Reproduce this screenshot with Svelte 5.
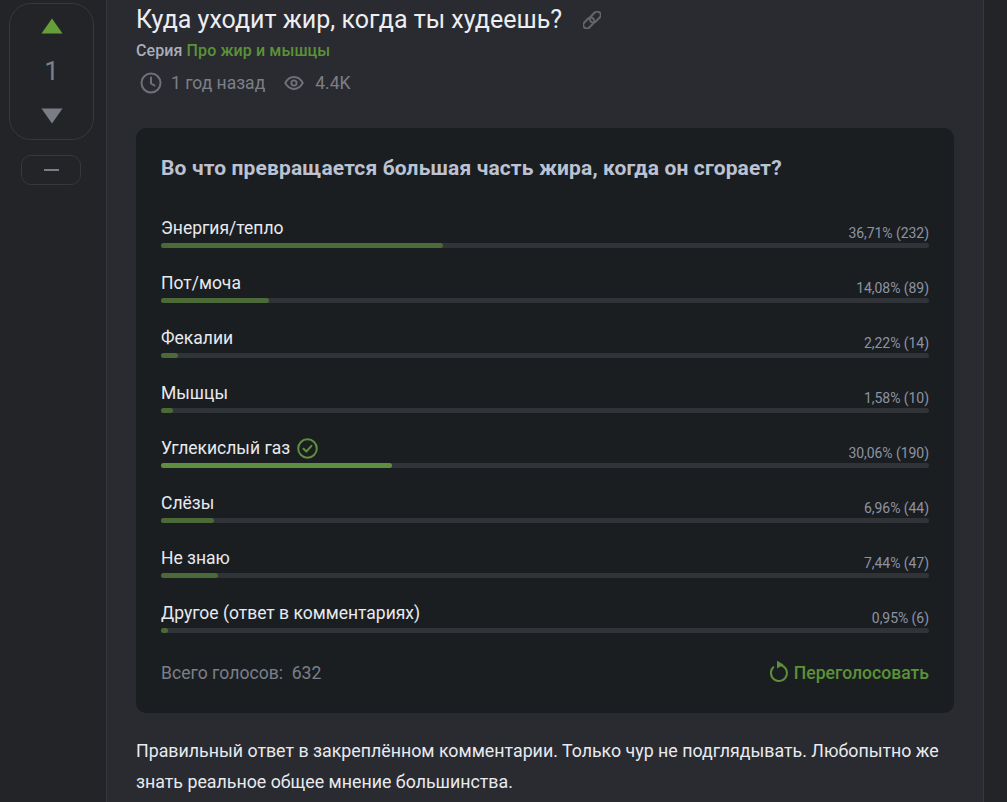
<script>
  const options = [
    { label: 'Энергия/тепло', stat: '36,71% (232)', pct: 36.71 },
    { label: 'Пот/моча', stat: '14,08% (89)', pct: 14.08 },
    { label: 'Фекалии', stat: '2,22% (14)', pct: 2.22 },
    { label: 'Мышцы', stat: '1,58% (10)', pct: 1.58 },
    { label: 'Углекислый газ', stat: '30,06% (190)', pct: 30.06, correct: true },
    { label: 'Слёзы', stat: '6,96% (44)', pct: 6.96 },
    { label: 'Не знаю', stat: '7,44% (47)', pct: 7.44 },
    { label: 'Другое (ответ в комментариях)', stat: '0,95% (6)', pct: 0.95 }
  ];
</script>

<div class="page">
  <aside class="rail">
    <div class="votes">
      <svg class="arrow" width="22" height="16" viewBox="0 0 22 16"><path d="M11 0.5 L21.5 15.5 H0.5 Z" fill="#659f3a" /></svg>
      <span class="score">1</span>
      <svg class="arrow" width="22" height="16" viewBox="0 0 22 16"><path d="M0.5 0.5 H21.5 L11 15.5 Z" fill="#7b7d85" /></svg>
    </div>
    <button class="collapse" aria-label="Свернуть"><span></span></button>
  </aside>

  <main class="content">
    <h1>Куда уходит жир, когда ты худеешь?
      <svg class="link" width="18" height="18" viewBox="0 0 18 18" fill="none" stroke="#63656b" stroke-width="2">
        <rect x="-0.5" y="8.5" width="12.5" height="7" rx="3.5" transform="rotate(-45 5.75 12)" />
        <rect x="6" y="2.5" width="12.5" height="7" rx="3.5" transform="rotate(-45 12.25 6)" />
      </svg>
    </h1>
    <div class="series">Серия <a href="#series">Про жир и мышцы</a></div>
    <div class="meta">
      <svg width="22" height="22" viewBox="0 0 22 22" fill="none" stroke="#6f7178" stroke-width="2">
        <circle cx="11" cy="11" r="9.5" />
        <path d="M11 5.5V11.5L14.5 13.5" stroke-linecap="round" stroke-linejoin="round" />
      </svg>
      <span class="when">1 год назад</span>
      <svg width="20" height="14" viewBox="0 0 22 16" fill="none" stroke="#6f7178" stroke-width="2.2">
        <path d="M1 8C3.5 3.5 7 1.2 11 1.2S18.5 3.5 21 8C18.5 12.5 15 14.8 11 14.8S3.5 12.5 1 8Z" />
        <circle cx="11" cy="8" r="3" />
      </svg>
      <span class="views">4.4K</span>
    </div>

    <section class="poll">
      <h2>Во что превращается большая часть жира, когда он сгорает?</h2>
      <div class="options">
        {#each options as o}
          <div class="option">
            <div class="row">
              <span class="label">{o.label}
                {#if o.correct}
                  <svg width="21" height="21" viewBox="0 0 21 21" fill="none" stroke="#5f8f3e" stroke-width="2">
                    <circle cx="10.5" cy="10.5" r="9.3" />
                    <path d="M6.5 10.8L9.3 13.5L14.5 7.8" stroke-linecap="round" stroke-linejoin="round" />
                  </svg>
                {/if}
              </span>
              <span class="stat">{o.stat}</span>
            </div>
            <div class="track">
              <div class="fill" class:correct={o.correct} style="width: {o.pct}%"></div>
            </div>
          </div>
        {/each}
      </div>
      <div class="foot">
        <span class="total">Всего голосов:&nbsp; 632</span>
        <a class="revote" href="#revote">
          <svg width="19" height="26" viewBox="0 0 19 26" fill="none" stroke="#5f8f3e" stroke-width="2">
            <path d="M9 5A8 8 0 1 1 3.3 7.3" stroke-linecap="round" />
            <path d="M7 0.8L13.5 4.6L7 8.5Z" fill="#5f8f3e" stroke="none" />
          </svg>
          Переголосовать
        </a>
      </div>
    </section>

    <p>Правильный ответ в закреплённом комментарии. Только чур не подглядывать. Любопытно же знать реальное общее мнение большинства.</p>
  </main>

  <div class="side"></div>
</div>

<style>
  :global(body) {
    background: #2a2b30;
    font-family: Roboto, "Noto Sans", sans-serif;
  }

  .page {
    display: flex;
    height: 802px;
    overflow: hidden;
  }

  .rail {
    flex: none;
    width: 97px;
    background: #232428;
    border-right: 1px solid #37383d;
    padding: 3px 0 0 9px;
  }

  .votes {
    width: 83px;
    height: 121px;
    border: 1px solid #37383d;
    border-radius: 22px;
    display: flex;
    flex-direction: column;
    align-items: center;
    padding-top: 14px;
  }

  .score {
    font-size: 26px;
    line-height: 30px;
    color: #7f8189;
    margin: 22px 0 22px;
  }

  .collapse {
    display: flex;
    align-items: center;
    justify-content: center;
    width: 60px;
    height: 30px;
    margin: 15px 0 0 12px;
    padding: 0;
    background: none;
    border: 1px solid #37383d;
    border-radius: 10px;
  }

  .collapse span {
    width: 15px;
    height: 2px;
    background: #7b7d85;
  }

  .content {
    width: 818px;
    flex: none;
    padding: 0 29px;
    color: #e4e6ec;
  }

  h1 {
    margin: 0;
    font-size: 25px;
    font-weight: 400;
    line-height: 40px;
    color: #eceef2;
    display: flex;
    align-items: center;
    gap: 21px;
  }

  .series {
    margin-top: 1px;
    font-size: 16px;
    letter-spacing: 0.1px;
    font-weight: 500;
    line-height: 20px;
    color: #a8adbb;
  }

  .series a {
    color: #5b9238;
    text-decoration: none;
  }

  .meta {
    display: flex;
    align-items: center;
    margin: 10px 0 0 4px;
    height: 24px;
    font-size: 17.5px;
    color: #7d7f87;
    gap: 9px;
  }

  .when {
    margin-right: 10px;
  }

  .views {
    margin-left: 2px;
  }

  .poll {
    margin-top: 33px;
    background: #1b1e21;
    border-radius: 10px;
    padding: 25px 25px 24px;
    height: 585px;
    box-sizing: border-box;
  }

  h2 {
    margin: 0;
    font-size: 21px;
    letter-spacing: 0.14px;
    line-height: 30px;
    font-weight: 700;
    color: #bcc2d2;
  }

  .options {
    margin-top: 29px;
  }

  .option {
    height: 55px;
  }

  .row {
    display: flex;
    justify-content: space-between;
    align-items: flex-end;
    height: 28px;
  }

  .label {
    display: flex;
    align-items: center;
    gap: 7px;
    font-size: 17.5px;
    line-height: 24px;
    color: #e8eaf0;
  }

  .stat {
    font-size: 14px;
    letter-spacing: -0.05px;
    line-height: 18px;
    color: #8d93a3;
    margin-bottom: -2px;
  }

  .track {
    height: 5px;
    margin-top: 3px;
    background: #303337;
    border-radius: 3px;
  }

  .fill {
    height: 100%;
    background: #4b6a38;
    border-radius: 3px;
  }

  .fill.correct {
    background: #5f8f3e;
  }

  .foot {
    display: flex;
    justify-content: space-between;
    align-items: center;
    margin-top: 6px;
    height: 30px;
    font-size: 17.6px;
  }

  .total {
    color: #7b7f8a;
  }

  .revote {
    display: flex;
    align-items: center;
    gap: 5px;
    color: #5b9238;
    font-weight: 500;
    text-decoration: none;
  }

  p {
    margin: 22px 0 0;
    font-size: 17.8px;
    line-height: 31px;
    color: #e8eaf0;
  }

  .side {
    flex: 1;
    background: #232428;
    border-left: 1px solid #37383d;
  }
</style>
